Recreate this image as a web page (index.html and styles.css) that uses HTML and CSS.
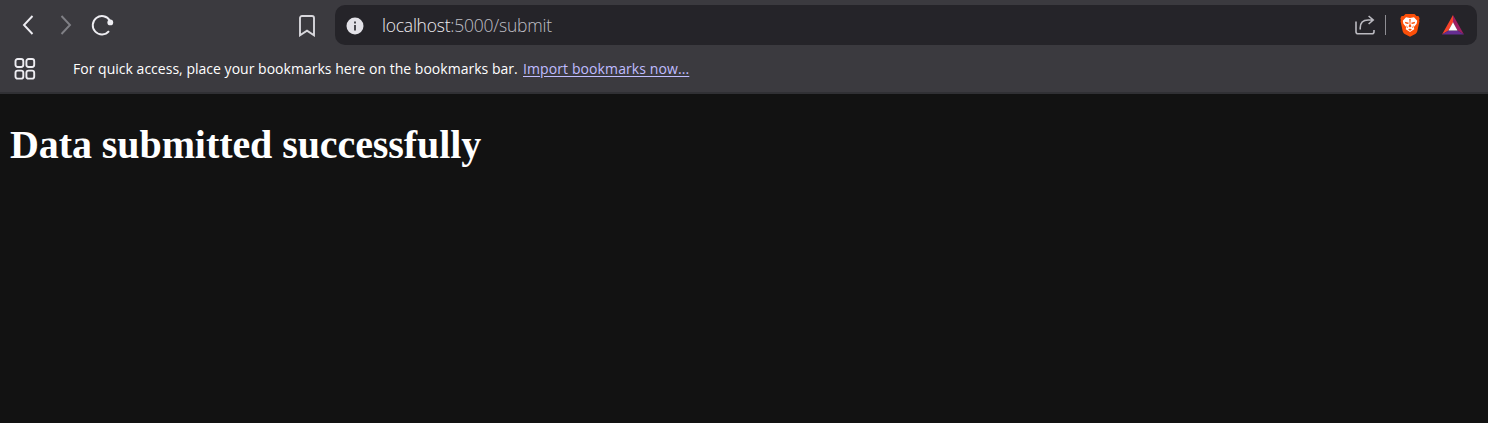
FILE: index.html
```html
<!DOCTYPE html>
<html lang="en">
<head>
<meta charset="utf-8">
<title>localhost:5000/submit</title>
<link rel="stylesheet" href="styles.css">
</head>
<body>
<header class="chrome">
  <div class="toolbar">
    <svg class="icon back" width="12" height="20" viewBox="0 0 12 20"><path d="M10.5 1L2 10l8.500 9"/></svg>
    <svg class="icon forward" width="12" height="20" viewBox="0 0 12 20"><path d="M1.500 1l8.500 9-8.500 9"/></svg>
    <svg class="icon reload" width="24" height="22" viewBox="0 0 24 22"><path d="M18 17.200A9.200 9.200 0 1 1 18.800 6.500"/><circle class="dot" cx="19.300" cy="8.400" r="2.900"/></svg>
    <svg class="icon bookmark" width="16" height="22" viewBox="0 0 16 22"><path d="M1 3a2 2 0 0 1 2-2h10a2 2 0 0 1 2 2v17.300L8 15.700 1 20.300z"/></svg>
    <div class="address">
      <svg class="info" width="18" height="18" viewBox="0 0 18 18"><circle cx="9" cy="9" r="8.500" fill="#e3e2e8"/><path d="M8 4.400h2v2H8zM8 8h2v5.400H8z" fill="#4a494f"/></svg>
      <span class="url"><span class="host">localhost</span>:5000/submit</span>
      <svg class="share" width="20" height="20" viewBox="0 0 20 20"><path d="M1 6.500v10.200a2 2 0 0 0 2 2h14a2 2 0 0 0 2-2v-1.600M5.200 14.500V13c0-5 3-8 8-8h5M13.600 1l4.600 4-4.600 4"/></svg>
      <span class="divider"></span>
      <svg class="shield" width="20" height="24" viewBox="0 0 20 24"><path fill="#fb4f09" d="M5.500 1h9l2 2 1.900-.1 1.200 2.300-.5 2L19.500 8l-2.200 10.200c-.3 1.200-1 2-2 2.700L10 23.800l-5.300-2.900c-1-.7-1.700-1.500-2-2.700L.5 8l.4-.8-.5-2 1.200-2.300 1.900.1z"/><path fill="#fff" d="M6 4.200l4 .8 4-.8 3.200 3.500-.6 3-2.700 3.400.3 2.200L10 19l-4.200-2.700.3-2.200-2.700-3.400-.6-3z"/><path fill="#fb4f09" d="M4.800 8.700l4 1-.6 1.400-2.700-.6zM15.200 8.700l-4 1 .6 1.400 2.700-.6zM9.300 6h1.400l-.4 5 1.200 2.200L10 14.600l-1.500-1.400L9.700 11zM6.500 12l1.500 3-1.300-.5zM13.500 12L12 15l1.300-.5zM8 16.700l2-1.100 2 1.100-2 1z"/></svg>
      <svg class="triangle" width="24" height="20" viewBox="0 0 24 20"><path fill="#f6432a" d="M12 0v7.200L7.500 15.500 1 19.500z"/><path fill="#9e1f63" d="M12 0l11 19.500-6.500-4L12 7.200z"/><path fill="#662d91" d="M1 19.500l6.500-4h9l6.500 4z"/><path fill="#fff" d="M12 7.200l4.500 8.300h-9z"/></svg>
    </div>
  </div>
  <div class="bookmarks">
    <svg class="icon apps" width="22" height="22" viewBox="0 0 22 22"><rect x="1.500" y="1" width="7.800" height="8" rx="2.200"/><rect x="12.400" y="1" width="7.800" height="8" rx="2.200"/><rect x="1.500" y="12.600" width="7.800" height="8" rx="2.200"/><rect x="12.400" y="12.600" width="7.800" height="8" rx="2.200"/></svg>
    <span class="hint">For quick access, place your bookmarks here on the bookmarks bar.</span>
    <a class="import">Import bookmarks now...</a>
  </div>
</header>
<main class="page"><h1 class="message">Data submitted successfully</h1></main>
</body>
</html>
```
FILE: styles.css
```css
* { box-sizing: border-box; }
body { margin: 0; height: 423px; background: #121212; overflow: hidden; }
svg { flex: none; display: block; }
.chrome { height: 94px; background: #3b3a3f; border-bottom: 2px solid #303034; font-family: "Open Sans", "Noto Sans", sans-serif; white-space: nowrap; }
.toolbar { display: flex; align-items: center; height: 50px; padding: 0 11px 0 21.500px; }
.icon { fill: none; stroke: #eeedf2; stroke-width: 1.9; }
.forward { margin-left: 26.500px; stroke: #808086; }
.reload { margin-left: 19px; }
.reload .dot { fill: #eeedf2; stroke: none; }
.bookmark { margin: 1px 0 0 183.500px; stroke: #d8d7dc; }
.address { display: flex; align-items: center; flex: 1; height: 40px; margin-left: 20.500px; padding: 0 12px 0 11px; border-radius: 10px; background: #252429; }
.info { margin-top: 2px; }
.url { width: 170px; margin: 0 0 1px 18px; font-size: 17.5px; line-height: 24px; font-weight: 300; letter-spacing: -0.23px; color: #bfbec4; }
.host { color: #eeedf2; }
.share { margin-left: auto; fill: none; stroke: #bbbac0; stroke-width: 1.6; }
.divider { width: 1.5px; height: 20px; margin: 0 14px 0 10px; background: #8f8e94; }
.triangle { margin-left: 21px; }
.bookmarks { display: flex; align-items: center; height: 38px; padding-left: 14px; font-size: 14px; color: #fff; }
.hint { width: 450px; margin: 0 0 2px 37px; letter-spacing: 0.02px; }
.import { margin-bottom: 2px; color: #c0bdff; letter-spacing: 0.1px; text-decoration: underline; text-underline-offset: 2px; }
.page { padding: 25px 10px; }
.message { margin: 0; font: bold 40px/52px "Liberation Serif", serif; letter-spacing: -0.08px; color: #fff; }
```
